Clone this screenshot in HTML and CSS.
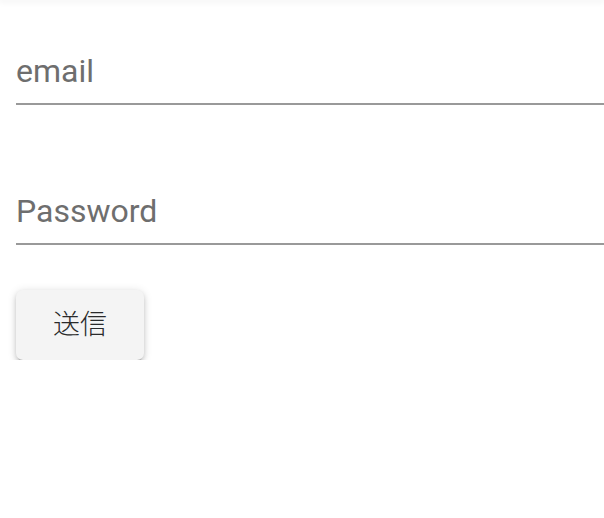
FILE: index.html
```html
<!DOCTYPE html>
<html lang="ja">
<head>
<meta charset="utf-8">
<link rel="stylesheet" href="styles.css">
</head>
<body>
<div class="topbar"></div>
<form class="form">
  <div class="field"><span class="label">email</span></div>
  <div class="field"><span class="label">Password</span></div>
  <button type="button" class="btn">送信</button>
</form>
</body>
</html>
```
FILE: styles.css
```css
html, body {
  margin: 0;
  padding: 0;
  background: #fff;
  font-family: Roboto, "Noto Sans CJK JP", sans-serif;
}
.topbar {
  height: 0;
  box-shadow: 0 0 6px 2px rgba(0,0,0,0.06);
}
.form {
  display: flex;
  flex-direction: column;
  align-items: flex-start;
  padding: 48px 0 0 16px;
}
.field {
  align-self: stretch;
  padding: 4px 0 13px;
  border-bottom: 2px solid #999;
}
.field + .field {
  margin-top: 83px;
}
.label {
  display: block;
  font-size: 32px;
  line-height: 38px;
  color: #6e6e6e;
}
.btn {
  margin-top: 45px;
  width: 128px;
  height: 70px;
  border: none;
  border-radius: 7px;
  background: #f4f4f4;
  color: #2a2a2a;
  font-family: "Noto Sans CJK JP", sans-serif;
  font-size: 27px;
  font-weight: 300;
  box-shadow: 0 5px 2px -3px rgba(0,0,0,0.25), 0 3px 5px 0 rgba(0,0,0,0.16), 0 1px 10px 0 rgba(0,0,0,0.12);
  padding: 0 0 5px;
  cursor: pointer;
}
```
